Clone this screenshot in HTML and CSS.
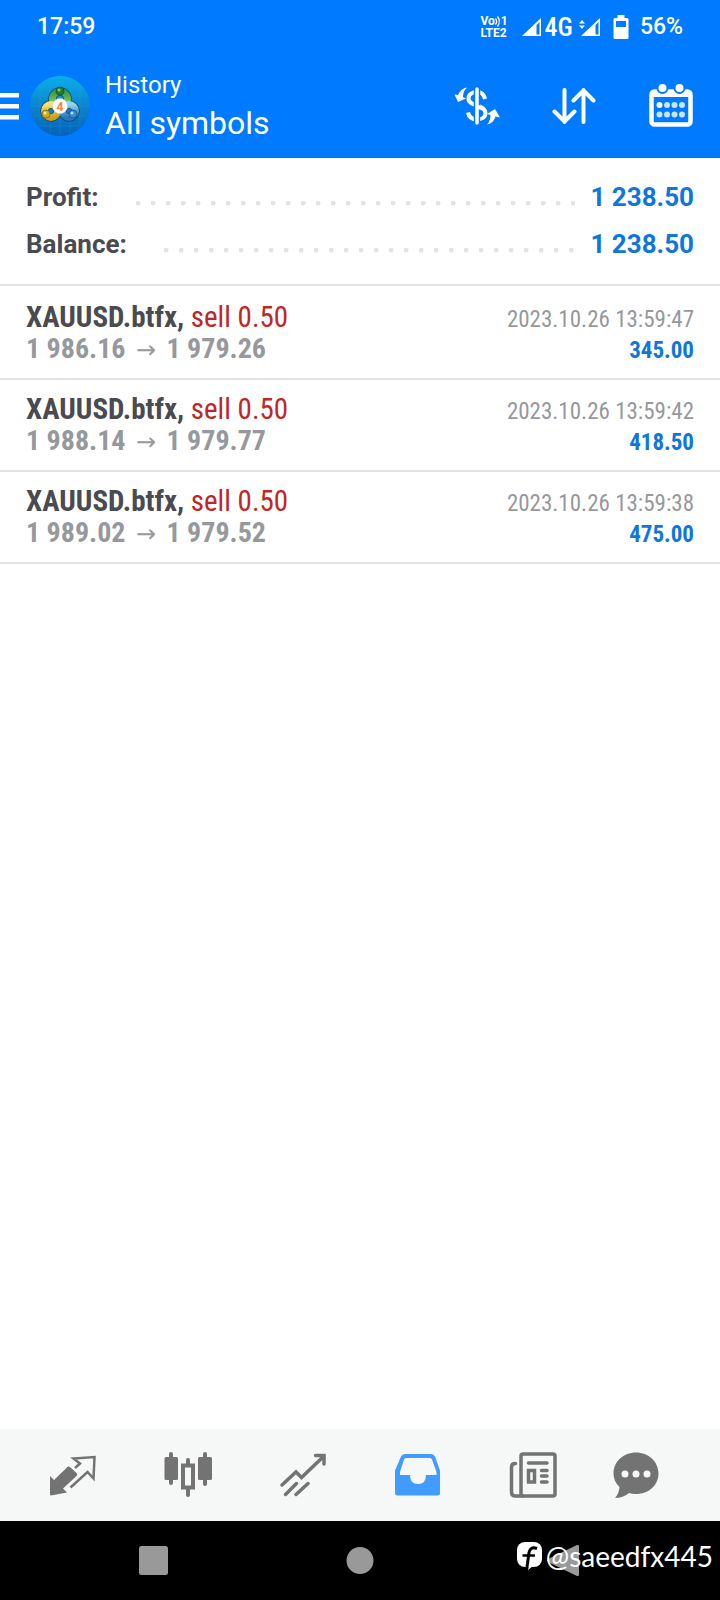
FILE: index.html
```html
<!DOCTYPE html>
<html lang="en">
<head>
<meta charset="utf-8">
<meta name="viewport" content="width=device-width, initial-scale=1">
<title>History</title>
<link rel="stylesheet" href="styles.css">
</head>
<body>
<header class="header">
  <div class="status">
    <span class="status-time">17:59</span>
    <div class="status-icons">
      <div class="volte">
        <span class="volte-line">Vo<svg width="6" height="11" viewBox="0 0 6 11" fill="none" stroke="currentColor" stroke-width="1.3"><path d="M0.5 2.500a5 5 0 0 1 0 6M2.500 0.500a8 8 0 0 1 0 10"/></svg>1</span>
        <span class="volte-line">LTE2</span>
      </div>
      <svg class="signal" width="20" height="18" viewBox="0 0 20 18"><path fill="currentColor" fill-rule="evenodd" d="M0 18L19 0v18zM14.500 7v9.500h3V4z"/></svg>
      <span class="network">4G</span>
      <svg class="signal-data" width="22" height="18" viewBox="0 0 22 18" fill="currentColor"><path d="M0 5.500L3 2l3 3.500zM0 7.500h6L3 11z"/><path fill-rule="evenodd" d="M2 18L21 0v18zM16.500 7v9.500h3V4z"/></svg>
      <svg class="battery" width="16" height="24" viewBox="0 0 16 24"><path fill="currentColor" fill-rule="evenodd" d="M4.500 0h7v3H14a1.500 1.500 0 0 1 1.500 1.500v18A1.500 1.500 0 0 1 14 24H2A1.500 1.500 0 0 1 .5 22.500v-18A1.500 1.500 0 0 1 2 3h2.500zM3 6v6h10V6z"/></svg>
      <span>56%</span>
    </div>
  </div>
  <div class="toolbar">
    <button class="menu" type="button" aria-label="Menu">
      <svg width="19" height="28" viewBox="0 0 19 28" fill="currentColor"><path d="M0 1h19v4.500H0zM0 12h19v4.500H0zM0 23h19v4.500H0z"/></svg>
    </button>
    <svg class="logo" width="60" height="60" viewBox="0 0 60 60" aria-hidden="true">
      <defs>
        <linearGradient id="sea" x1="0" y1="0" x2="0" y2="1"><stop offset="0" stop-color="#0aaee8"/><stop offset=".5" stop-color="#0a84cf"/><stop offset="1" stop-color="#0562b8"/></linearGradient>
        <linearGradient id="green" x1="0" y1="0" x2="0" y2="1"><stop offset="0" stop-color="#2f9a4a"/><stop offset="1" stop-color="#a4d65c"/></linearGradient>
        <linearGradient id="gold" x1="0" y1="0" x2="0" y2="1"><stop offset="0" stop-color="#f3e374"/><stop offset="1" stop-color="#c99f1c"/></linearGradient>
        <linearGradient id="blue" x1="0" y1="0" x2="0" y2="1"><stop offset="0" stop-color="#8fd4f2"/><stop offset="1" stop-color="#2377c4"/></linearGradient>
      </defs>
      <circle cx="30" cy="30" r="30" fill="url(#sea)"/>
      <path d="M9 11h42M3 20h54M1 30h58M3 40h54M9 50h42M10 9v42M20 3v54M30 1v58M40 3v54M50 9v42" stroke="#35b2e6" stroke-opacity=".18"/>
      <g fill="none" stroke="#17486a" stroke-width="8.500"><circle cx="30" cy="23" r="7.500"/><circle cx="21" cy="35" r="6.500"/><circle cx="39" cy="35" r="6.500"/></g>
      <circle cx="30" cy="23" r="7.500" fill="none" stroke="url(#green)" stroke-width="7"/>
      <circle cx="21" cy="35" r="6.500" fill="none" stroke="url(#gold)" stroke-width="7"/>
      <circle cx="39" cy="35" r="6.500" fill="none" stroke="url(#blue)" stroke-width="7"/>
      <circle cx="30" cy="15" r="4" fill="#237b31" stroke="#135325" stroke-width=".8"/><circle cx="29" cy="14" r="1.500" fill="#86c66e"/>
      <circle cx="16" cy="38" r="4" fill="#d0a91e" stroke="#80681a" stroke-width=".8"/><circle cx="15" cy="37" r="1.500" fill="#fff0a0"/>
      <circle cx="43" cy="38" r="4" fill="#3b8bd0" stroke="#175388" stroke-width=".8"/><circle cx="42" cy="37" r="1.500" fill="#aee2ff"/>
      <circle cx="30" cy="30" r="7.500" fill="#fff" stroke="#cfd6d2" stroke-width=".6"/>
      <text class="logo-digit" x="30" y="34.500" text-anchor="middle">4</text>
    </svg>
    <div class="heading">
      <h1 class="title">History</h1>
      <p class="subtitle">All symbols</p>
    </div>
    <div class="actions">
      <button class="action" type="button" aria-label="Deals">
        <svg width="46" height="40" viewBox="0 0 46 40" fill="none" stroke="currentColor">
          <path d="M31 13c-1-5-4-7-8-7-5 0-8.500 2.500-8.500 6.500S18 18 23 19.500s8.500 3.500 8.500 7.500-3.500 6.500-8.500 6.500c-5 0-8-2-9-7" stroke-width="4"/>
          <path d="M23 2v36" stroke="#007aff" stroke-width="6.500"/>
          <path d="M23 3v34" stroke-width="3.500" stroke-linecap="round"/>
          <path d="M24 18.500l4 2v4l-4-1.500z" fill="currentColor" stroke="none"/>
          <path d="M13 1.500Q7 2 4 9L.5 8.500 4 16l8-3.500-3-1.500q0-6 4-9.500zM33 38.500q6-.5 8.500-8l4.500 1L41 23l-8 5 3.500 1q0 6-3.500 9.500z" fill="currentColor" stroke="none"/>
        </svg>
      </button>
      <button class="action" type="button" aria-label="Sort">
        <svg width="44" height="36" viewBox="0 0 44 36" fill="none" stroke="currentColor" stroke-width="4" stroke-linecap="round" stroke-linejoin="round"><path d="M12.500 2v32M2.500 23.500l10 10 10-10M31.500 34V2M21.500 12.500l10-10 10 10"/></svg>
      </button>
      <button class="action" type="button" aria-label="Select period">
        <svg width="46" height="46" viewBox="0 1 46 46" fill="none">
          <rect x="3.500" y="9.500" width="39" height="33" rx="3" stroke="currentColor" stroke-width="4.500"/>
          <path d="M4 10h38v5H4z" fill="currentColor"/>
          <g fill="currentColor" stroke="#007aff" stroke-width="2"><circle cx="14.500" cy="6" r="5"/><circle cx="31.500" cy="6" r="5"/></g>
          <g fill="#c5e6ff"><circle cx="11.500" cy="23" r="3" fill="#fff"/><circle cx="19" cy="23" r="3"/><circle cx="26.500" cy="23" r="3"/><circle cx="34" cy="23" r="3"/><circle cx="11.500" cy="32.500" r="3"/><circle cx="19" cy="32.500" r="3"/><circle cx="26.500" cy="32.500" r="3"/><circle cx="34" cy="32.500" r="3"/></g>
        </svg>
      </button>
    </div>
  </div>
</header>

<main class="main">
  <dl class="summary">
    <div class="total"><dt>Profit:</dt><dd>1 238.50</dd></div>
    <div class="total"><dt>Balance:</dt><dd>1 238.50</dd></div>
  </dl>
  <ul class="deals">
    <li class="deal">
      <div class="line"><span class="symbol">XAUUSD.btfx, <span class="sell">sell 0.50</span></span><time class="time">2023.10.26 13:59:47</time></div>
      <div class="line"><span class="prices">1 986.16 <span class="arrow">→</span> 1 979.26</span><span class="profit">345.00</span></div>
    </li>
    <li class="deal">
      <div class="line"><span class="symbol">XAUUSD.btfx, <span class="sell">sell 0.50</span></span><time class="time">2023.10.26 13:59:42</time></div>
      <div class="line"><span class="prices">1 988.14 <span class="arrow">→</span> 1 979.77</span><span class="profit">418.50</span></div>
    </li>
    <li class="deal">
      <div class="line"><span class="symbol">XAUUSD.btfx, <span class="sell">sell 0.50</span></span><time class="time">2023.10.26 13:59:38</time></div>
      <div class="line"><span class="prices">1 989.02 <span class="arrow">→</span> 1 979.52</span><span class="profit">475.00</span></div>
    </li>
  </ul>
</main>

<nav class="tabs" aria-label="Sections">
  <button class="tab" type="button" aria-label="Quotes">
    <svg width="48" height="48" viewBox="0 0 48 48"><path fill="currentColor" d="M1 26l4 4 13.500-13q1.500-1 3 .5l6 5.500q1.500 1.500 0 3L14 38.500l4 4L2 45.500q-1 0-1-1z"/><path fill="none" stroke="currentColor" stroke-width="2.500" d="M26 18l5-4.500-6.500-5L45.500 7l-1 21.500-6-6.500L21.500 37.500"/></svg>
  </button>
  <button class="tab" type="button" aria-label="Charts">
    <svg width="48" height="48" viewBox="0 0 48 48"><g fill="currentColor"><rect x=".5" y="7" width="13.500" height="23" rx="1.500"/><rect x="34" y="7" width="14" height="23" rx="1.500"/></g><path fill="none" stroke="currentColor" stroke-width="4" stroke-linecap="round" d="M7 4v29M41 4v30M24 10v5M24 38v7"/><rect x="19" y="15.500" width="10" height="22" fill="none" stroke="currentColor" stroke-width="4"/></svg>
  </button>
  <button class="tab" type="button" aria-label="Trade">
    <svg width="48" height="48" viewBox="0 0 48 48" fill="none" stroke="currentColor" stroke-width="3.500" stroke-linecap="round"><path d="M3 35l14-13 5.500 5.500L44 7M36.500 5.500H45V14M6.500 44.500l11-11M17 44.500l12-11"/></svg>
  </button>
  <button class="tab tab-active" type="button" aria-label="History" aria-current="page">
    <svg width="48" height="48" viewBox="0 0 48 48"><path fill="currentColor" fill-rule="evenodd" d="M11 4h26q3 0 4 2.500l5 14V43q0 2.500-2.500 2.500h-40Q1 45.500 1 43V20.500l6-14Q8 4 11 4zm1 4q-1.500 0-2 1.500L6 22v3H16q0 9 8 9t8-9h10.500v-3L38 9.500Q37.500 8 36 8z"/></svg>
  </button>
  <button class="tab" type="button" aria-label="News">
    <svg width="48" height="48" viewBox="0 0 48 48" fill="none" stroke="currentColor" stroke-width="3.500" stroke-linecap="round"><rect x="12" y="4" width="34" height="42" rx="2"/><path d="M6.500 13.500Q2.500 13.500 2.500 17v25q0 4 4 4H14M19.500 13H38M32.500 20.500H38M32.500 26H38M32.500 32H38"/><rect x="19.500" y="20.500" width="6" height="11.500"/></svg>
  </button>
  <button class="tab" type="button" aria-label="Messages">
    <svg width="48" height="48" viewBox="0 0 48 48"><path fill="currentColor" fill-rule="evenodd" d="M24 2.500c12.500 0 22.500 9 22.500 21S36.500 44 24 44q-4 0-7-1-6 5-14 5 4-4.500 4.500-11Q1.500 31.500 1.500 23.500c0-12 10-21 22.500-21zM13 20.500a3.500 3.500 0 1 0 0 7 3.500 3.500 0 1 0 0-7zM24 20.500a3.500 3.500 0 1 0 0 7 3.500 3.500 0 1 0 0-7zM35 20.500a3.500 3.500 0 1 0 0 7 3.500 3.500 0 1 0 0-7z"/></svg>
  </button>
</nav>

<footer class="system">
  <button class="system-key" type="button" aria-label="Recent apps"><svg width="40" height="32" viewBox="0 0 40 32"><rect x="6" y="1" width="29" height="29" rx="2.500" fill="currentColor"/></svg></button>
  <button class="system-key" type="button" aria-label="Home"><svg width="40" height="32" viewBox="0 0 40 32"><circle cx="20" cy="15.500" r="13.500" fill="currentColor"/></svg></button>
  <button class="system-key" type="button" aria-label="Back"><svg width="40" height="32" viewBox="0 0 40 32"><path fill="currentColor" d="M1 14L30 0q2-.5 2 1.500v28q0 2-2 1.500L1 17q-2-1.500 0-3z"/></svg></button>
  <div class="watermark">
    <svg width="25" height="29" viewBox="0 0 25 29"><rect width="25" height="25" rx="8" fill="#fff"/><path d="M20 6.500c-5-2-7.500.5-8 4L10 25" fill="none" stroke="#000" stroke-width="3"/><path d="M5.500 13.500H18" stroke="#000" stroke-width="2.500"/><path d="M11 28l5-4h-4z" fill="#fff"/></svg>
    <span>@saeedfx445</span>
  </div>
</footer>
</body>
</html>
```
FILE: styles.css
```css
* {
  box-sizing: border-box;
}

body {
  margin: 0;
  min-height: 100vh;
  display: flex;
  flex-direction: column;
  background: #fff;
  color: #4a4a50;
  font-family: Roboto, "Liberation Sans", sans-serif;
}

svg {
  display: block;
  flex: none;
}

button {
  display: flex;
  align-items: center;
  justify-content: center;
  margin: 0;
  padding: 0;
  border: 0;
  background: none;
  color: inherit;
  font: inherit;
}

.header {
  background: #007aff;
  color: #fff;
}

.status {
  display: flex;
  align-items: center;
  justify-content: space-between;
  height: 54px;
  padding: 0 37px;
  font-size: 23px;
  font-weight: 500;
  line-height: 28px;
}

.status-icons {
  display: flex;
  align-items: center;
}

.volte {
  font-size: 12px;
  font-weight: 700;
  line-height: 12px;
}

.volte-line {
  display: flex;
  align-items: center;
}

.signal {
  margin-left: 14px;
}

.network {
  margin: 0 6px 0 3px;
  font-family: "Roboto Condensed", "Liberation Sans Narrow", Roboto, sans-serif;
  font-size: 26px;
}

.battery {
  margin: 0 11px 0 12px;
}

.toolbar {
  display: flex;
  align-items: center;
  height: 104px;
  padding-right: 26px;
}

.logo {
  margin: 0 15px 0 11px;
}

.logo-digit {
  fill: #ef8a3c;
  font-size: 13px;
  font-weight: 700;
}

.heading {
  flex: 1;
  padding-top: 1px;
}

.title,
.subtitle {
  margin: 0;
  font-weight: 400;
}

.title {
  font-size: 24px;
  line-height: 28px;
}

.subtitle {
  margin-top: 4px;
  font-size: 32px;
  line-height: 40px;
}

.actions {
  display: flex;
  align-items: center;
  gap: 52px;
}

.main {
  flex: 1;
}

.summary {
  margin: 0;
  padding: 16px 26px;
  border-bottom: 2px solid #e2e2e2;
  font-size: 26px;
  font-weight: 700;
  line-height: 47px;
}

.total {
  display: flex;
  align-items: center;
}

.total::after {
  content: "";
  flex: 1;
  order: 1;
  height: 5px;
  margin: 12px 15px 0 37px;
  background: radial-gradient(circle at 2px 2px, #e3e3e5 2px, transparent 3px) 0 0 / 15px 5px repeat-x;
}

.total dd {
  order: 2;
  margin: 0;
  color: #0f76de;
}

.deals {
  margin: 0;
  padding: 2px 0 0;
  list-style: none;
}

.deal {
  padding: 13px 26px;
  border-bottom: 2px solid #e2e2e2;
  font-family: "Roboto Condensed", "Liberation Sans Narrow", Roboto, sans-serif;
  font-size: 29px;
  line-height: 32px;
}

.line {
  display: flex;
  align-items: baseline;
  justify-content: space-between;
  height: 32px;
}

.symbol,
.prices,
.profit {
  font-weight: 700;
}

.sell {
  color: #c02626;
  font-weight: 400;
}

.prices,
.time {
  color: #96989c;
}

.prices {
  font-size: 28px;
}

.arrow {
  margin: 0 4px;
  font-family: "Noto Sans", "DejaVu Sans", sans-serif;
  font-size: 24px;
  font-weight: 400;
}

.time,
.profit {
  font-size: 23px;
}

.profit {
  color: #0f76de;
}

.tabs {
  display: grid;
  grid-template-columns: repeat(5, 5fr) 4fr;
  height: 92px;
  padding: 0 38px 3px 15px;
  background: #f6f7f7;
  color: #737373;
}

.tab-active {
  color: #429bff;
}

.system {
  position: relative;
  display: grid;
  grid-template-columns: repeat(3, 1fr);
  height: 79px;
  padding: 0 50px;
  background: #000;
  color: #999;
}

.watermark {
  position: absolute;
  right: 7px;
  bottom: 28px;
  display: flex;
  align-items: center;
  gap: 4px;
  color: #fff;
  font-family: Lato, "Noto Sans", sans-serif;
  font-size: 28px;
  line-height: 32px;
}
```
